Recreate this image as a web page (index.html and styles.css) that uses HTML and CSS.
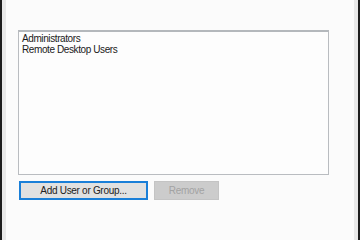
FILE: index.html
```html
<!DOCTYPE html>
<html lang="en">
<head>
  <meta charset="UTF-8">
  <title>Permissions</title>
  <link rel="stylesheet" href="styles.css">
</head>
<body>
  <div class="window">
    <div class="panel">
      <!-- Lista de grupuri -->
      <div class="listbox">
        <div class="item">Administrators</div>
        <div class="item">Remote Desktop Users</div>
      </div>
      <div class="actions">
        <button class="btn btn-default">Add User or Group...</button>
        <button class="btn" disabled>Remove</button>
      </div>
    </div>
  </div>
</body>
</html>
```

FILE: styles.css
```css
body {
  margin: 0;
  font-family: 'Liberation Sans', Arial, sans-serif;
  font-size: 10px;
  color: #1a1a1a;
}

.window {
  height: 240px;
  box-sizing: border-box;
  border-left: 2px solid #1c1c1c;
  border-right: 2px solid #1c1c1c;
  background-color: #e8e8e8;
  padding: 0 4px;
}

.panel {
  height: 100%;
  background-color: #fbfbfb;
  padding: 30px 0 0 12px;
  box-sizing: border-box;
}

.listbox {
  width: 311px;
  height: 145px;
  box-sizing: border-box;
  border: 1px solid #b9bcc0;
  border-top: 2px solid #b4b8bc;
  background-color: #fdfdfd;
  padding: 1px 3px;
}

.item {
  line-height: 11px;
  letter-spacing: -0.4px;
}

.actions {
  display: flex;
  gap: 6px;
  margin-top: 6px;
  padding-left: 1px;
}

.btn {
  height: 19px;
  box-sizing: border-box;
  margin: 0;
  padding: 0;
  font-family: inherit;
  font-size: 10px;
  letter-spacing: -0.3px;
  color: #222;
  background-color: #e1e1e1;
  border: 1px solid #adadad;
  border-radius: 0;
}

.btn-default {
  width: 129px;
  border: 2px solid #1a7fd8;
}

.btn:disabled {
  width: 65px;
  color: #a3a3a3;
  background-color: #cccccc;
  border-color: #c4c4c4;
}
```
